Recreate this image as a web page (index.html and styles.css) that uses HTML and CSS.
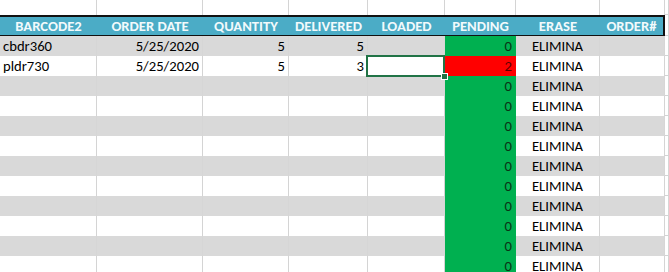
FILE: index.html
```html
<!DOCTYPE html>
<html>
<head>
<meta charset="utf-8">
<link rel="stylesheet" href="styles.css">
</head>
<body>
<div class="sheet">
  <div class="row top">
    <div class="c"></div><div class="c"></div><div class="c"></div><div class="c"></div><div class="c"></div><div class="c"></div><div class="c"></div><div class="c"></div><div class="c x"></div>
  </div>
  <div class="row head">
    <div class="c">BARCODE2</div><div class="c">ORDER DATE</div><div class="c">QUANTITY</div><div class="c">DELIVERED</div><div class="c">LOADED</div><div class="c">PENDING</div><div class="c">ERASE</div><div class="c last">ORDER#</div><div class="c x"></div>
  </div>
  <div class="row band">
    <div class="c l">cbdr360</div><div class="c r">5/25/2020</div><div class="c r">5</div><div class="c r">5</div><div class="c"></div><div class="c r ok">0</div><div class="c m">ELIMINA</div><div class="c"></div><div class="c x"></div>
  </div>
  <div class="row">
    <div class="c l">pldr730</div><div class="c r">5/25/2020</div><div class="c r">5</div><div class="c r">3</div><div class="c sel"><span class="handle"></span></div><div class="c r bad">2</div><div class="c m">ELIMINA</div><div class="c"></div><div class="c x"></div>
  </div>
  <div class="row band">
    <div class="c"></div><div class="c"></div><div class="c"></div><div class="c"></div><div class="c"></div><div class="c r ok">0</div><div class="c m">ELIMINA</div><div class="c"></div><div class="c x"></div>
  </div>
  <div class="row">
    <div class="c"></div><div class="c"></div><div class="c"></div><div class="c"></div><div class="c"></div><div class="c r ok">0</div><div class="c m">ELIMINA</div><div class="c"></div><div class="c x"></div>
  </div>
  <div class="row band">
    <div class="c"></div><div class="c"></div><div class="c"></div><div class="c"></div><div class="c"></div><div class="c r ok">0</div><div class="c m">ELIMINA</div><div class="c"></div><div class="c x"></div>
  </div>
  <div class="row">
    <div class="c"></div><div class="c"></div><div class="c"></div><div class="c"></div><div class="c"></div><div class="c r ok">0</div><div class="c m">ELIMINA</div><div class="c"></div><div class="c x"></div>
  </div>
  <div class="row band">
    <div class="c"></div><div class="c"></div><div class="c"></div><div class="c"></div><div class="c"></div><div class="c r ok">0</div><div class="c m">ELIMINA</div><div class="c"></div><div class="c x"></div>
  </div>
  <div class="row">
    <div class="c"></div><div class="c"></div><div class="c"></div><div class="c"></div><div class="c"></div><div class="c r ok">0</div><div class="c m">ELIMINA</div><div class="c"></div><div class="c x"></div>
  </div>
  <div class="row band">
    <div class="c"></div><div class="c"></div><div class="c"></div><div class="c"></div><div class="c"></div><div class="c r ok">0</div><div class="c m">ELIMINA</div><div class="c"></div><div class="c x"></div>
  </div>
  <div class="row">
    <div class="c"></div><div class="c"></div><div class="c"></div><div class="c"></div><div class="c"></div><div class="c r ok">0</div><div class="c m">ELIMINA</div><div class="c"></div><div class="c x"></div>
  </div>
  <div class="row band">
    <div class="c"></div><div class="c"></div><div class="c"></div><div class="c"></div><div class="c"></div><div class="c r ok">0</div><div class="c m">ELIMINA</div><div class="c"></div><div class="c x"></div>
  </div>
  <div class="row">
    <div class="c"></div><div class="c"></div><div class="c"></div><div class="c"></div><div class="c"></div><div class="c r ok">0</div><div class="c m">ELIMINA</div><div class="c"></div><div class="c x"></div>
  </div>
</div>
</body>
</html>
```
FILE: styles.css
```css
html, body {
  margin: 0;
  padding: 0;
  background: #ffffff;
  overflow: hidden;
}
body {
  width: 669px;
  height: 272px;
  font-family: Carlito, "Liberation Sans", sans-serif;
  font-size: 14.67px;
  color: #000;
}
.sheet {
  display: flex;
  flex-direction: column;
}
.row {
  display: grid;
  grid-template-columns: 97px 106px 86px 79px 77px 71px 84px 65px 4px;
  height: 20px;
  background: #ffffff;
}
.row.band {
  background: #d9d9d9;
}
.c {
  box-sizing: border-box;
  border-right: 1px solid #d4d4d4;
  display: flex;
  align-items: flex-end;
  padding: 0 3px 1px;
  line-height: 18px;
  white-space: nowrap;
  overflow: visible;
}
.band .c {
  border-right-color: #d6d6d6;
}
.c.x {
  background: #ffffff;
  border-bottom: 1px solid #d4d4d4;
  padding: 0;
}
.top {
  height: 15px;
}
.head {
  height: 21px;
  background: #4bacc6;
}
.head .c {
  border-top: 2px solid #111;
  border-bottom: 1px solid #111;
  border-right: none;
  justify-content: center;
  align-items: center;
  padding: 0;
  font-weight: bold;
  color: #f2fafc;
}
.head .c.last {
  border-right: 2px solid #111;
}
.head .c.x {
  border-top: none;
  border-bottom: 1px solid #d4d4d4;
  border-right: 1px solid #d4d4d4;
  background: #fff;
}
.l { justify-content: flex-start; }
.r { justify-content: flex-end; }
.m { justify-content: center; }
.c.ok {
  background: #00b050;
  border-right-color: #00b050;
  color: #0a3316;
}
.c.bad {
  background: #ff0000;
  border-right-color: #ff0000;
  color: #5a0000;
}
.c.sel {
  position: relative;
}
.c.sel::after {
  content: "";
  position: absolute;
  top: -1px;
  left: -2px;
  right: -1px;
  bottom: -1px;
  border: 2px solid #217346;
}
.handle {
  position: absolute;
  right: -3px;
  bottom: -3px;
  width: 5px;
  height: 5px;
  background: #217346;
  box-shadow: 0 0 0 1px #ffffff;
  z-index: 2;
}
```
